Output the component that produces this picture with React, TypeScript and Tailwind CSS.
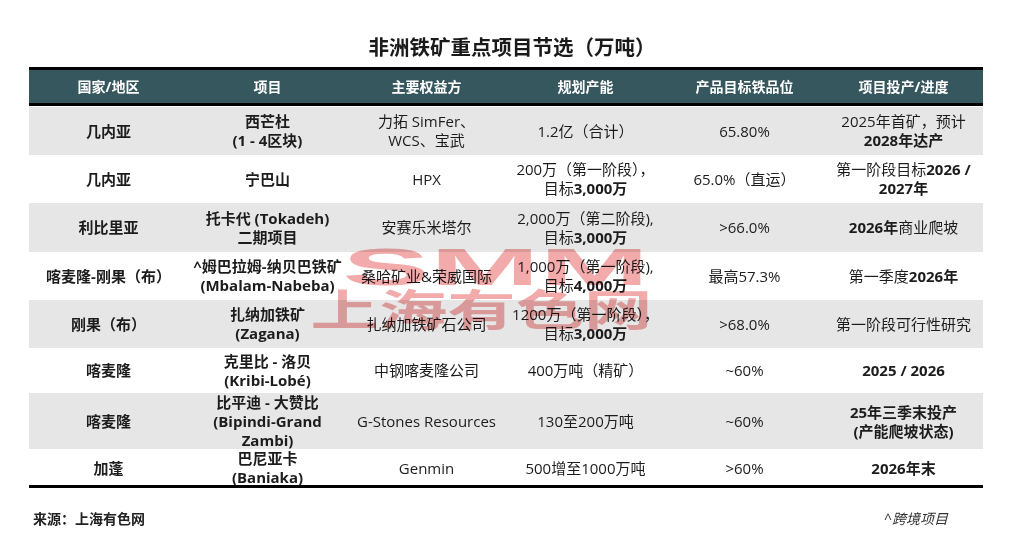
import type { ReactNode } from "react";

type Row = {
  h: string;
  gray: boolean;
  cells: ReactNode[];
};

const B = ({ children }: { children: ReactNode }) => <span className="font-bold">{children}</span>;

const rows: Row[] = [
  {
    h: "h-[48px]",
    gray: true,
    cells: [
      <B>几内亚</B>,
      <B>
        西芒杜
        <br />
        (1 - 4区块)
      </B>,
      <>
        力拓 SimFer、
        <br />
        WCS、宝武
      </>,
      <>1.2亿（合计）</>,
      <>65.80%</>,
      <>
        2025年首矿，预计
        <br />
        <B>2028年达产</B>
      </>,
    ],
  },
  {
    h: "h-[48px]",
    gray: false,
    cells: [
      <B>几内亚</B>,
      <B>宁巴山</B>,
      <>HPX</>,
      <>
        200万（第一阶段），
        <br />
        目标<B>3,000万</B>
      </>,
      <>65.0%（直运）</>,
      <>
        第一阶段目标<B>2026 /</B>
        <br />
        <B>2027年</B>
      </>,
    ],
  },
  {
    h: "h-[49px]",
    gray: true,
    cells: [
      <B>利比里亚</B>,
      <B>
        托卡代 (Tokadeh)
        <br />
        二期项目
      </B>,
      <>安赛乐米塔尔</>,
      <>
        2,000万（第二阶段),
        <br />
        目标<B>3,000万</B>
      </>,
      <>&gt;66.0%</>,
      <>
        <B>2026年</B>商业爬坡
      </>,
    ],
  },
  {
    h: "h-[48px]",
    gray: false,
    cells: [
      <B>喀麦隆-刚果（布）</B>,
      <B>
        ^姆巴拉姆-纳贝巴铁矿
        <br />
        (Mbalam-Nabeba)
      </B>,
      <>桑哈矿业&amp;荣威国际</>,
      <>
        1,000万（第一阶段),
        <br />
        目标<B>4,000万</B>
      </>,
      <>最高57.3%</>,
      <>
        第一季度<B>2026年</B>
      </>,
    ],
  },
  {
    h: "h-[48px]",
    gray: true,
    cells: [
      <B>刚果（布）</B>,
      <B>
        扎纳加铁矿
        <br />
        (Zagana)
      </B>,
      <>扎纳加铁矿石公司</>,
      <>
        1200万（第一阶段），
        <br />
        目标<B>3,000万</B>
      </>,
      <>&gt;68.0%</>,
      <>第一阶段可行性研究</>,
    ],
  },
  {
    h: "h-[45px]",
    gray: false,
    cells: [
      <B>喀麦隆</B>,
      <B>
        克里比 - 洛贝
        <br />
        (Kribi-Lobé)
      </B>,
      <>中钢喀麦隆公司</>,
      <>400万吨（精矿）</>,
      <>~60%</>,
      <B>2025 / 2026</B>,
    ],
  },
  {
    h: "h-[56px]",
    gray: true,
    cells: [
      <B>喀麦隆</B>,
      <B>
        比平迪 - 大赞比
        <br />
        (Bipindi-Grand
        <br />
        Zambi)
      </B>,
      <>G-Stones Resources</>,
      <>130至200万吨</>,
      <>~60%</>,
      <B>
        25年三季末投产
        <br />
        (产能爬坡状态)
      </B>,
    ],
  },
  {
    h: "h-[36px]",
    gray: false,
    cells: [
      <B>加蓬</B>,
      <B>
        巴尼亚卡
        <br />
        (Baniaka)
      </B>,
      <>Genmin</>,
      <>500增至1000万吨</>,
      <>&gt;60%</>,
      <B>2026年末</B>,
    ],
  },
];

const headers = ["国家/地区", "项目", "主要权益方", "规划产能", "产品目标铁品位", "项目投产/进度"];

export default function App() {
  return (
    <div
      className="relative h-[547px] w-full overflow-hidden bg-white text-[#1c1c1c]"
      style={{ fontFamily: '"Open Sans", "Noto Sans CJK SC", sans-serif' }}
    >
      {/* Title */}
      <h1 className="pt-[32px] text-center text-[20.5px] font-bold leading-[30px] text-[#1a1a1a]">
        非洲铁矿重点项目节选（万吨）
      </h1>

      {/* Table */}
      <div className="mx-[29px] mt-[5px] w-[954px] border-y-[3px] border-black">
        <div className="grid h-[36px] grid-cols-6 items-center border-b-[3px] border-black bg-[#37575e] text-[14px] font-bold text-white">
          {headers.map((h) => (
            <div key={h} className="text-center">
              {h}
            </div>
          ))}
        </div>
        <div className="h-px bg-white" />
        {rows.map((r, i) => (
          <div
            key={i}
            className={`grid grid-cols-6 items-center text-[15px] leading-[19px] ${r.h} ${
              r.gray ? "bg-[#e6e6e6]" : "bg-white"
            }`}
          >
            {r.cells.map((c, j) => (
              <div key={j} className="whitespace-nowrap text-center">
                {c}
              </div>
            ))}
          </div>
        ))}
      </div>

      {/* Footer */}
      <div className="mx-[33px] mt-[20px] flex w-[915px] items-center justify-between text-[14px] text-[#222]">
        <span className="font-bold">来源：上海有色网</span>
        <span className="italic text-[#333]">^跨境项目</span>
      </div>

      {/* Watermark */}
      <div className="pointer-events-none absolute left-[310px] top-[247px] flex w-[342px] flex-col items-center text-[#f2aaaa] mix-blend-multiply">
        <div
          className="ml-[30px] scale-x-[2.53] text-[52px] font-bold leading-[40px]"
          style={{ fontFamily: '"Liberation Sans", sans-serif' }}
        >
          SMM
        </div>
        <div className="scale-x-[1.59] text-[43px] font-bold leading-[46px]">上海有色网</div>
      </div>
    </div>
  );
}
